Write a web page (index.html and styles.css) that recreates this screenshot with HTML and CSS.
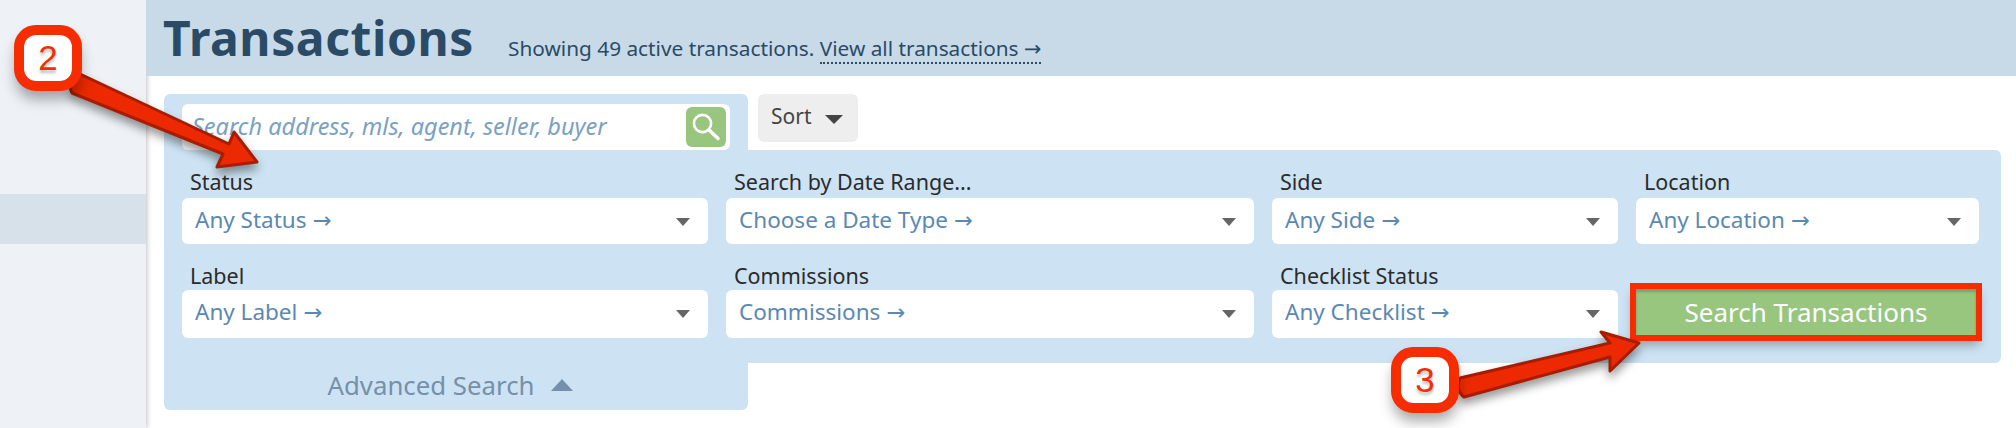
FILE: index.html
```html
<!DOCTYPE html>
<html lang="en">
<head>
  <meta charset="UTF-8">
  <title>Transactions</title>
  <link rel="stylesheet" href="styles.css">
</head>
<body>
  <div class="layout">
    <aside class="sidebar">
      <div class="side-active"></div>
    </aside>

    <main class="main">
      <header class="page-head">
        <h1>Transactions</h1>
        <p>Showing 49 active transactions. <a href="#">View all transactions <span class="arr">→</span></a></p>
      </header>

      <div class="tools">
        <div class="search-tab">
          <div class="search-box">
            <input type="text" placeholder="Search address, mls, agent, seller, buyer">
            <button class="search-go" type="button">
              <svg width="28" height="28" viewBox="0 0 28 28" fill="none" stroke="#fff">
                <circle cx="10.5" cy="10.5" r="8.6" stroke-width="2.6"/>
                <path d="M17 17l9 8.5" stroke-width="3.4" stroke-linecap="round"/>
              </svg>
            </button>
          </div>
        </div>
        <div class="sort">Sort <span class="caret-sort"></span></div>
      </div>

      <form class="filters">
        <div class="field">
          <label>Status</label>
          <div class="select">Any Status <span class="arr">→</span></div>
        </div>
        <div class="field">
          <label>Search by Date Range...</label>
          <div class="select">Choose a Date Type <span class="arr">→</span></div>
        </div>
        <div class="field">
          <label>Side</label>
          <div class="select">Any Side <span class="arr">→</span></div>
        </div>
        <div class="field">
          <label>Location</label>
          <div class="select">Any Location <span class="arr">→</span></div>
        </div>
        <div class="field">
          <label>Label</label>
          <div class="select tall">Any Label <span class="arr">→</span></div>
        </div>
        <div class="field">
          <label>Commissions</label>
          <div class="select tall">Commissions <span class="arr">→</span></div>
        </div>
        <div class="field">
          <label>Checklist Status</label>
          <div class="select tall">Any Checklist <span class="arr">→</span></div>
        </div>
        <div class="field">
          <label>&nbsp;</label>
          <button class="search-btn" type="button">Search Transactions</button>
        </div>
      </form>

      <div class="advanced">Advanced Search <span class="caret-up"></span></div>
    </main>
  </div>

  <!-- screenshot annotations on top of the page -->
  <svg class="arrows" width="2016" height="428" viewBox="0 0 2016 428">
    <path class="arrow" d="M80 74 L229 144 L234 132 L257 162 L217 167 L223 154 L72 93 Q66 83 80 74Z"/>
    <path class="arrow" d="M1460 378 L1610 343 L1601 332 L1639 343 L1610 371 L1610 357 L1464 397 Q1455 390 1460 378Z"/>
  </svg>
  <div class="badge badge-two">2</div>
  <div class="badge badge-three">3</div>
</body>
</html>
```

FILE: styles.css
```css
* {
  box-sizing: border-box;
}

body {
  margin: 0;
  width: 2016px;
  height: 428px;
  overflow: hidden;
  font-family: "Noto Sans", sans-serif;
  background-color: #fff;
}

.layout {
  display: flex;
  height: 428px;
}

.sidebar {
  width: 146px;
  flex: none;
  padding-top: 194px;
  background-color: #eef2f7;
  box-shadow: 1px 0 5px rgba(0, 0, 0, 0.25);
}

.side-active {
  height: 50px;
  background-color: #d6e1ea;
}

.main {
  flex: 1;
}

.page-head {
  display: flex;
  align-items: baseline;
  height: 76px;
  padding: 9px 0 0 17px;
  background-color: #c8dae8;
  color: #2a4a66;
}

.page-head h1 {
  margin: 0;
  font-size: 48px;
  font-weight: 700;
  letter-spacing: 0.6px;
  line-height: 58px;
}

.page-head p {
  margin: 0 0 0 34px;
  font-size: 20.8px;
}

.page-head a {
  color: #2a4a66;
  text-decoration: none;
  border-bottom: 2px dotted #2a4a66;
}

.arr {
  font-family: "DejaVu Sans", sans-serif;
}

.tools {
  display: flex;
  margin: 18px 0 0 18px;
  gap: 10px;
}

.search-tab {
  width: 584px;
  height: 56px;
  padding: 10px 18px 0;
  background-color: #cde3f3;
  border-radius: 6px 6px 0 0;
}

.search-box {
  display: flex;
  align-items: center;
  justify-content: space-between;
  height: 46px;
  padding-right: 4px;
  background-color: #fff;
  border-radius: 6px;
}

.search-box input {
  flex: 1;
  border: none;
  outline: none;
  background: none;
  padding: 0 0 3px 10px;
  font-family: inherit;
  font-size: 23.5px;
  font-style: italic;
}

.search-box input::placeholder {
  color: #7aa1c2;
  opacity: 1;
}

.search-go {
  display: flex;
  align-items: center;
  justify-content: center;
  width: 40px;
  height: 40px;
  padding: 0;
  border: none;
  border-radius: 6px;
  background-color: #98c67f;
}

.sort {
  display: flex;
  align-items: center;
  width: 100px;
  height: 48px;
  padding: 0 0 4px 13px;
  gap: 13px;
  font-size: 21px;
  color: #444;
  background-color: #eee;
  border-radius: 6px;
}

.caret-sort {
  border-left: 9px solid transparent;
  border-right: 9px solid transparent;
  border-top: 9px solid #444;
  margin-top: 6px;
}

.filters {
  display: grid;
  grid-template-columns: 526px 528px 346px 343px;
  align-content: start;
  column-gap: 18px;
  width: 1837px;
  height: 213px;
  margin-left: 18px;
  padding: 0 18px;
  background-color: #cde3f3;
  border-radius: 0 6px 6px 0;
}

.field label {
  display: block;
  height: 48px;
  padding: 18px 0 0 8px;
  font-size: 21.5px;
  line-height: 27px;
  color: #2b2b2b;
}

.field:nth-child(n+5) label {
  height: 46px;
  padding-top: 18px;
}

.select {
  position: relative;
  height: 46px;
  padding-left: 13px;
  font-size: 22.5px;
  line-height: 44px;
  color: #5b88b1;
  background-color: #fff;
  border-radius: 6px;
}

.select.tall {
  height: 48px;
}

.select::after {
  content: "";
  position: absolute;
  right: 18px;
  top: 20px;
  border-left: 7px solid transparent;
  border-right: 7px solid transparent;
  border-top: 8px solid #666;
}

.search-btn {
  display: block;
  width: 340px;
  height: 46px;
  margin: -1px 0 0 0;
  padding: 0;
  border: none;
  font-family: inherit;
  font-size: 26px;
  color: #fff;
  background-color: #98c67f;
  outline: 6px solid #f72c00;
  box-shadow: inset 0 3px 3px rgba(0, 0, 0, 0.2), 0 7px 10px 3px rgba(0, 0, 0, 0.3);
}

.advanced {
  display: flex;
  align-items: center;
  justify-content: center;
  gap: 16px;
  width: 584px;
  height: 47px;
  margin-left: 18px;
  padding: 0 12px 4px 0;
  font-size: 25.8px;
  color: #7590a8;
  background-color: #cde3f3;
  border-radius: 0 0 6px 6px;
}

.caret-up {
  border-left: 11px solid transparent;
  border-right: 11px solid transparent;
  border-bottom: 12px solid #7590a8;
}

.arrows {
  position: absolute;
  left: 0;
  top: 0;
  pointer-events: none;
}

.arrow {
  fill: #ec2900;
  stroke: #a81c00;
  stroke-width: 3;
  stroke-linejoin: round;
  filter: drop-shadow(0 6px 5px rgba(0, 0, 0, 0.4));
}

.badge {
  position: absolute;
  display: flex;
  align-items: center;
  justify-content: center;
  width: 48px;
  height: 46px;
  border-radius: 12px;
  font-family: "Liberation Sans", sans-serif;
  font-size: 35px;
  color: #f72c00;
  text-shadow: 0 3px 3px rgba(0, 0, 0, 0.25);
  background-color: #fff;
  outline: 10px solid #f72c00;
  box-shadow: 0 10px 14px 8px rgba(0, 0, 0, 0.35);
}

.badge-two {
  left: 24px;
  top: 35px;
}

.badge-three {
  left: 1401px;
  top: 357px;
}
```
